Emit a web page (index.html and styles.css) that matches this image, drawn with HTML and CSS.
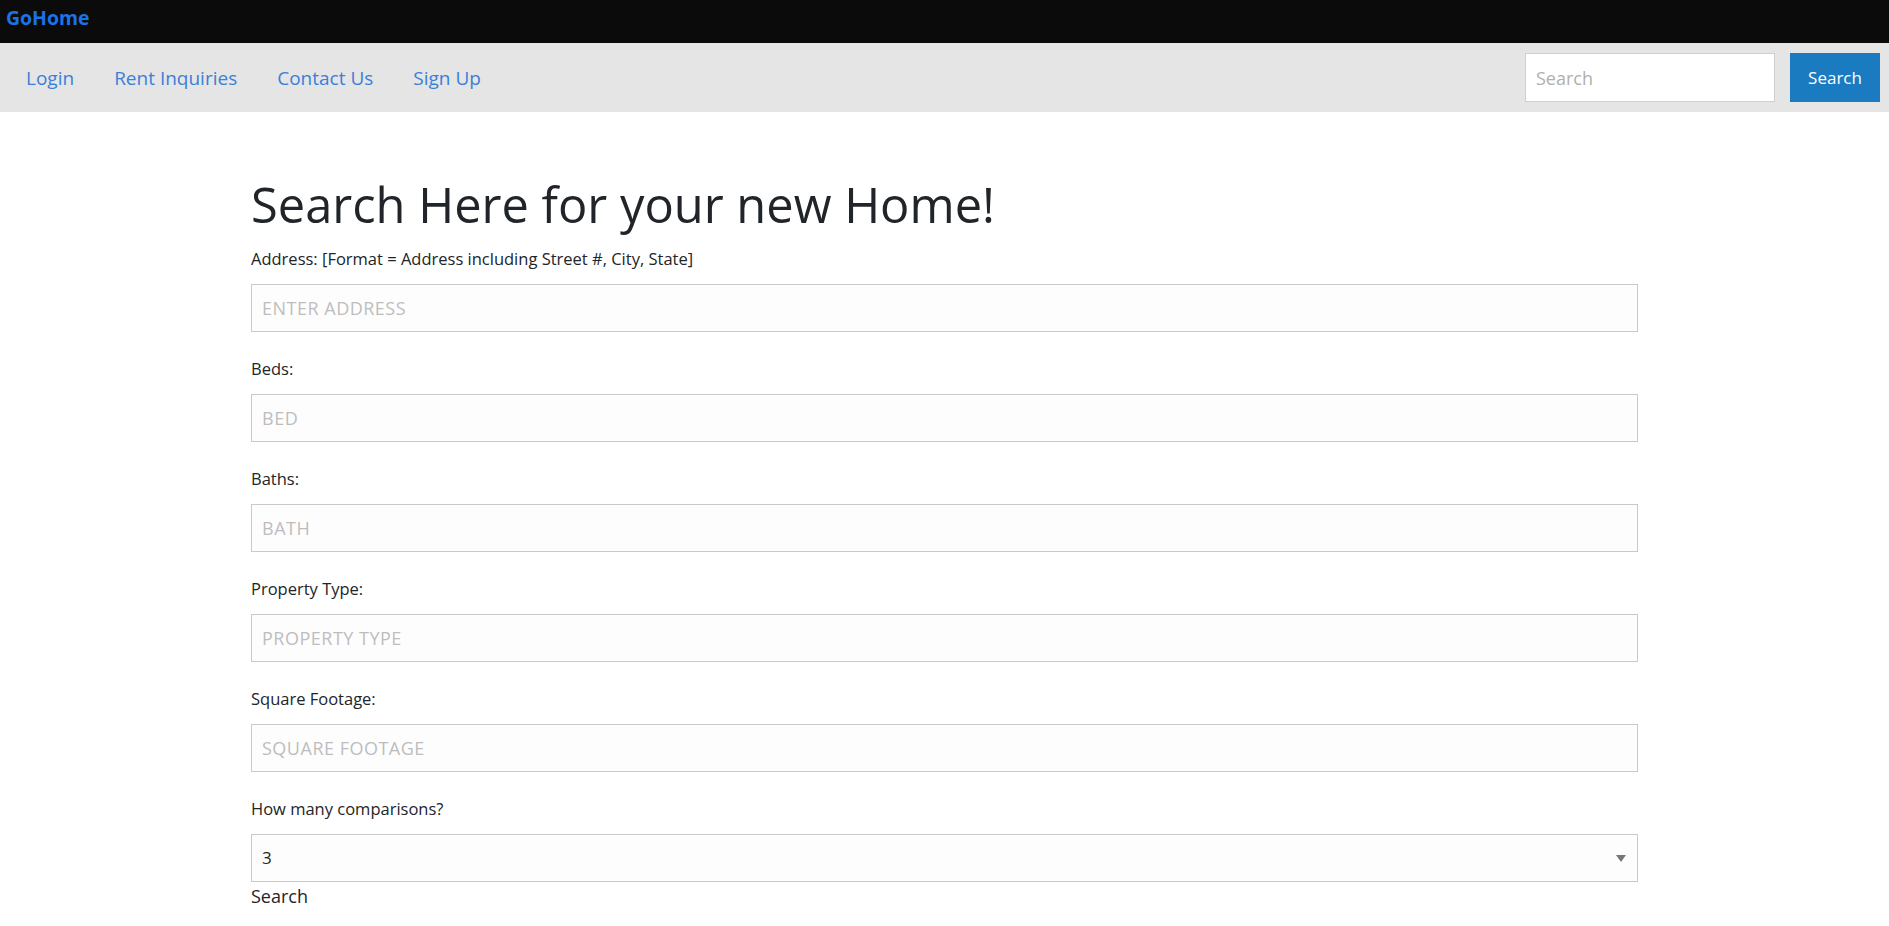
FILE: index.html
```html
<!DOCTYPE html>
<html lang="en">
<head>
<meta charset="utf-8">
<title>GoHome</title>
<link rel="stylesheet" href="styles.css">
</head>
<body>
<header class="topbar">
  <a class="brand" href="#">GoHome</a>
</header>
<nav class="navbar">
  <ul class="nav-links">
    <li><a href="#">Login</a></li>
    <li><a href="#">Rent Inquiries</a></li>
    <li><a href="#">Contact Us</a></li>
    <li><a href="#">Sign Up</a></li>
  </ul>
  <form class="nav-search">
    <input class="nav-search-input" type="text" placeholder="Search">
    <button class="nav-search-btn" type="button">Search</button>
  </form>
</nav>
<main class="container">
  <h1 class="title">Search Here for your new Home!</h1>
  <form class="search-form">
    <div class="field">
      <label class="field-label">Address: [Format = Address including Street #, City, State]</label>
      <input class="field-input" type="text" placeholder="ENTER ADDRESS">
    </div>
    <div class="field">
      <label class="field-label">Beds:</label>
      <input class="field-input" type="text" placeholder="BED">
    </div>
    <div class="field">
      <label class="field-label">Baths:</label>
      <input class="field-input" type="text" placeholder="BATH">
    </div>
    <div class="field">
      <label class="field-label">Property Type:</label>
      <input class="field-input" type="text" placeholder="PROPERTY TYPE">
    </div>
    <div class="field">
      <label class="field-label">Square Footage:</label>
      <input class="field-input" type="text" placeholder="SQUARE FOOTAGE">
    </div>
    <div class="field field-last">
      <label class="field-label">How many comparisons?</label>
      <div class="select-wrap">
        <select class="field-select">
          <option>3</option>
          <option>1</option>
          <option>2</option>
          <option>4</option>
          <option>5</option>
        </select>
      </div>
    </div>
    <button class="submit-text" type="button">Search</button>
  </form>
</main>
</body>
</html>
```

FILE: styles.css
```css
* { box-sizing: border-box; }

html, body {
  margin: 0;
  padding: 0;
  background: #ffffff;
  font-family: "Open Sans", "Noto Sans", sans-serif;
  color: #212529;
}

.topbar {
  height: 43px;
  background: #0b0b0b;
  display: flex;
  align-items: center;
  padding-left: 6px;
}

.brand {
  color: #1a73e8;
  font-weight: 700;
  font-size: 19.4px;
  text-decoration: none;
  margin-top: -8px;
}

.navbar {
  height: 69px;
  background: #e5e5e5;
  display: flex;
  align-items: center;
  justify-content: space-between;
  padding: 0 9px 0 6px;
}

.nav-links {
  list-style: none;
  margin: 0;
  padding: 0;
  display: flex;
}

.nav-links a {
  display: block;
  padding: 0 20px;
  color: #3b7fd9;
  font-size: 19px;
  text-decoration: none;
}

.nav-search {
  display: flex;
  align-items: center;
  gap: 15px;
}

.nav-search-input {
  width: 250px;
  height: 49px;
  border: 1px solid #cfcfcf;
  background: #ffffff;
  padding: 0 10px;
  font-family: inherit;
  font-size: 18px;
  color: #333;
  outline: none;
}

.nav-search-input::placeholder { color: #b0b0b0; }

.nav-search-btn {
  width: 90px;
  height: 49px;
  border: none;
  background: #1a7bc0;
  color: #ffffff;
  font-family: inherit;
  font-size: 17px;
  padding: 0;
}

.container {
  width: 1387px;
  margin: 0 auto;
  padding-top: 63px;
}

.title {
  font-size: 48.8px;
  font-weight: 500;
  line-height: 1.2;
  margin: 0 0 13px;
  color: #212529;
}

.search-form {
  display: flex;
  flex-direction: column;
}

.field {
  display: flex;
  flex-direction: column;
  margin-bottom: 25px;
}

.field-last { margin-bottom: 0; }

.field-label {
  font-size: 16.5px;
  line-height: 24px;
  margin-bottom: 13px;
  color: #212529;
}

.field-input,
.field-select {
  width: 100%;
  height: 48px;
  border: 1px solid #c9c9c9;
  background: #fdfdfd;
  padding: 0 10px;
  font-family: inherit;
  font-size: 18px;
  letter-spacing: 0.5px;
  color: #212529;
  outline: none;
  border-radius: 0;
}

.field-input::placeholder { color: #bdbdbd; }

.select-wrap { position: relative; }

.field-select {
  appearance: none;
  -webkit-appearance: none;
  font-size: 17px;
  letter-spacing: 0;
}

.select-wrap::after {
  content: "";
  position: absolute;
  right: 12px;
  top: 21px;
  border-left: 5px solid transparent;
  border-right: 5px solid transparent;
  border-top: 7px solid #777777;
  pointer-events: none;
}

.submit-text {
  align-self: flex-start;
  border: none;
  background: none;
  padding: 0;
  margin-top: 1px;
  font-family: inherit;
  font-size: 18px;
  line-height: 26px;
  color: #212529;
}
```
